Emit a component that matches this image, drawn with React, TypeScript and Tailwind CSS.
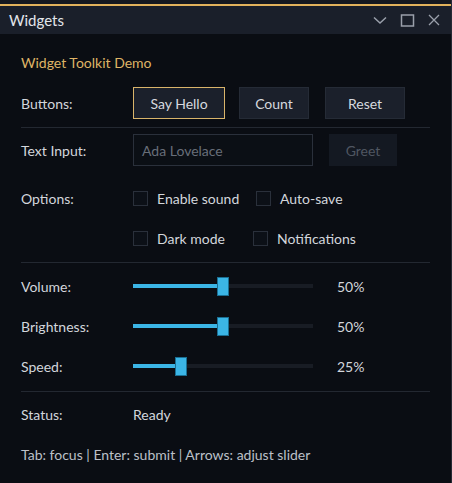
import React from "react";

const font = { fontFamily: "Lato, 'Noto Sans', sans-serif" };

function Btn({ label, w, focused = false }: { label: string; w: string; focused?: boolean }) {
  return (
    <button
      className={`${w} h-[32px] bg-[#1b202b] text-[14px] text-[#d6d9df] border ${
        focused ? "border-[#d9b46a] outline outline-1 outline-[#0a0d13]" : "border-[#252b36]"
      }`}
    >
      {label}
    </button>
  );
}

function Check({ label, w }: { label: string; w?: string }) {
  return (
    <div className={`flex items-center gap-[9px] ${w ?? ""}`}>
      <span className="w-[15px] h-[15px] border border-[#2a303b] bg-[#0c1017]" />
      <span>{label}</span>
    </div>
  );
}

function Slider({ label, value }: { label: string; value: number }) {
  const pos = Math.round((value / 100) * 168);
  return (
    <div className="flex items-center h-[40px]">
      <span className="w-[112px]">{label}</span>
      <div className="relative w-[180px] h-[20px] flex items-center">
        <div className="w-full h-[4px] bg-[#181c24]" />
        <div className="absolute left-0 h-[4px] bg-[#3bb5e6]" style={{ width: pos }} />
        <div
          className="absolute top-[1px] w-[12px] h-[19px] bg-[#3bb5e6] border border-[#1a6f93]"
          style={{ left: pos }}
        />
      </div>
      <span className="ml-[24px]">{value}%</span>
    </div>
  );
}

export default function App() {
  return (
    <div className="w-[452px] h-[483px] bg-[#0a0d13] flex flex-col text-[14px] text-[#d3d6dc] border-r border-[#262b35]" style={font}>
      <div className="h-[4px] bg-[#15181f]" />
      <div className="h-[2px] bg-[#e2b25c]" />
      <div className="h-[28px] bg-[#1a1f2a] flex items-center pl-[9px] pr-[10px]">
        <span className="text-[15px] text-[#e2e5ea] flex-1">Widgets</span>
        <div className="flex items-center gap-[12px] text-[#9aa0ab]">
          <svg width="16" height="16" viewBox="0 0 16 16" fill="none" stroke="currentColor" strokeWidth="1.5">
            <path d="M2 5.5 L8 11 L14 5.5" />
          </svg>
          <svg width="15" height="15" viewBox="0 0 15 15" fill="none" stroke="currentColor" strokeWidth="1.5">
            <rect x="1.5" y="2" width="12" height="11" />
          </svg>
          <svg width="14" height="14" viewBox="0 0 14 14" fill="none" stroke="currentColor" strokeWidth="1.3">
            <path d="M2 2 L12 12 M12 2 L2 12" />
          </svg>
        </div>
      </div>

      <div className="flex flex-col px-[21px] pt-[19px]">
        <div className="h-[18px] flex items-center text-[#dfb466]">Widget Toolkit Demo</div>

        <div className="flex items-center h-[34px] mt-[15px]">
          <span className="w-[112px]">Buttons:</span>
          <div className="flex items-center">
            <Btn label="Say Hello" w="w-[92px]" focused />
            <div className="ml-[14px]"><Btn label="Count" w="w-[70px]" /></div>
            <div className="ml-[16px]"><Btn label="Reset" w="w-[80px]" /></div>
          </div>
        </div>

        <div className="h-px bg-[#232831] mt-[7px]" />

        <div className="flex items-center h-[32px] mt-[6px]">
          <span className="w-[112px]">Text Input:</span>
          <div className="w-[180px] h-[32px] border border-[#2a303b] bg-[#0b0f15] flex items-center px-[8px] text-[#686e79]">
            Ada Lovelace
          </div>
          <div className="ml-[16px] w-[68px] h-[32px] bg-[#141922] flex items-center justify-center text-[#4f5661]">
            Greet
          </div>
        </div>

        <div className="flex items-center h-[40px] mt-[12px]">
          <span className="w-[112px]">Options:</span>
          <Check label="Enable sound" w="w-[123px]" />
          <Check label="Auto-save" />
        </div>
        <div className="flex items-center h-[40px]">
          <span className="w-[112px]" />
          <Check label="Dark mode" w="w-[120px]" />
          <Check label="Notifications" />
        </div>

        <div className="h-px bg-[#232831] mt-[4px]" />

        <div className="mt-[3px]">
          <Slider label="Volume:" value={50} />
          <Slider label="Brightness:" value={50} />
          <Slider label="Speed:" value={25} />
        </div>

        <div className="h-px bg-[#232831] mt-[5px]" />

        <div className="flex items-center h-[40px] mt-[2px]">
          <span className="w-[112px]">Status:</span>
          <span>Ready</span>
        </div>
        <div className="flex items-center h-[41px] text-[#bcc0c8]">
          Tab: focus | Enter: submit | Arrows: adjust slider
        </div>
      </div>
    </div>
  );
}
